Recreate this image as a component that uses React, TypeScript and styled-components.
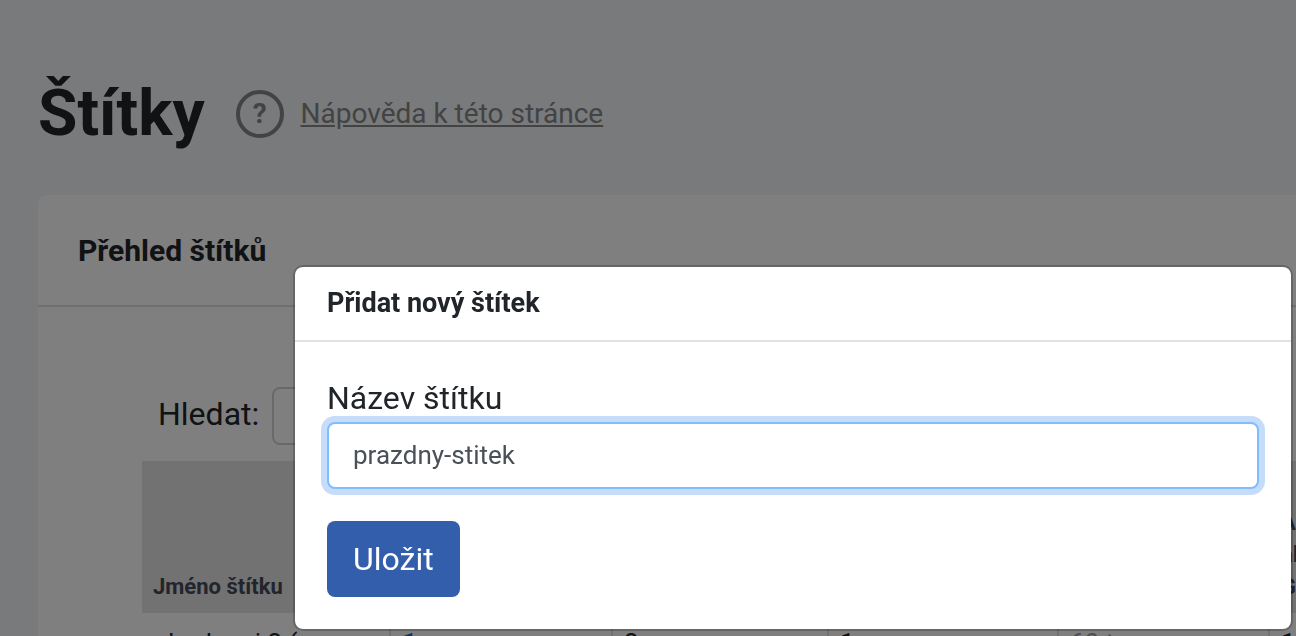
import React, { useState } from "react";
import styled, { createGlobalStyle } from "styled-components";

const GlobalStyle = createGlobalStyle`
  *, *::before, *::after { box-sizing: border-box; }
  body {
    margin: 0;
    background: #f2f4f8;
    color: #212529;
    font-family: Roboto, "Liberation Sans", sans-serif;
    font-size: 32px;
    line-height: 48px;
    overflow: hidden;
  }
`;

const Page = styled.main`
  height: 100vh;
  overflow: hidden;
  padding: 72px 0 0 38px;
`;

const PageHeader = styled.header`
  display: flex;
  align-items: center;
  height: 84px;
  margin-bottom: 39px;
`;

const PageTitle = styled.h1`
  margin: 0 31px 0 0;
  font-size: 64px;
  line-height: 76px;
  font-weight: 700;
`;

const HelpLink = styled.a`
  display: flex;
  align-items: center;
  gap: 17px;
  color: #868686;
  font-size: 28px;
  line-height: 42px;
  text-decoration: none;
`;

const HelpIcon = styled.span`
  display: flex;
  align-items: center;
  justify-content: center;
  width: 48px;
  height: 48px;
  border: 4px solid currentColor;
  border-radius: 50%;
  font-size: 28px;
  font-weight: 700;
`;

const HelpText = styled.span`
  text-decoration: underline;
`;

const Card = styled.section`
  background: #fff;
  border-radius: 8px 0 0 0;
`;

const CardHeader = styled.div`
  padding: 33px 40px 31px;
  border-bottom: 2px solid #dfdfdf;
`;

const CardTitle = styled.h2`
  margin: 0;
  font-size: 30px;
  line-height: 46px;
  font-weight: 700;
`;

const CardBody = styled.div`
  padding: 80px 0 0 104px;
`;

const SearchRow = styled.div`
  display: flex;
  align-items: center;
  gap: 13px;
  padding-left: 16px;
  margin-bottom: 16px;
`;

const SearchLabel = styled.label`
  padding-bottom: 4px;
`;

const SearchInput = styled.input`
  width: 360px;
  height: 58px;
  border: 2px solid #ced4da;
  border-radius: 8px;
  background: #fff;
  font: inherit;
`;

const Table = styled.table`
  table-layout: fixed;
  width: 1400px;
  border-collapse: separate;
  border-spacing: 0;
`;

const Column = styled.col<{ $width?: number }>`
  width: ${({ $width }) => ($width ? `${$width}px` : "auto")};
`;

const HeadCell = styled.th`
  height: 152px;
  padding: 10px 11px;
  vertical-align: bottom;
  text-align: left;
  background: #e4e4e4;
  color: #444b59;
  font-size: 22px;
  line-height: 32px;
  font-weight: 700;

  & + & {
    padding-left: 13px;
  }
`;

const Cell = styled.td<{ $muted?: boolean }>`
  padding: 12px 11px;
  border-left: 2px solid #dee2e6;
  color: ${({ $muted }) => ($muted ? "#a0a0a0" : "inherit")};
  font-size: 26px;
  line-height: 36px;
  white-space: nowrap;

  &:first-child {
    padding-left: 12px;
    border-left: 0;
  }
`;

const CountLink = styled.a`
  color: #335eac;
  font-weight: 700;
  text-decoration: none;
`;

const Backdrop = styled.div`
  position: fixed;
  inset: 0;
  padding: 265px 3px 0 293px;
  background: rgba(0, 0, 0, 0.5);
`;

const Modal = styled.div`
  border: 2px solid rgba(0, 0, 0, 0.2);
  border-radius: 10px;
  background: #fff;
  background-clip: padding-box;
`;

const ModalHeader = styled.div`
  padding: 16px 32px;
  border-bottom: 2px solid #dee2e6;
`;

const ModalTitle = styled.h2`
  margin: 0;
  font-size: 27px;
  line-height: 41px;
  font-weight: 700;
`;

const ModalForm = styled.form`
  padding: 32px;
`;

const FieldLabel = styled.label`
  display: block;
`;

const TextInput = styled.input`
  display: block;
  width: 100%;
  height: 67px;
  margin-bottom: 32px;
  padding: 0 24px 2px;
  border: 2px solid #80bdff;
  border-radius: 8px;
  outline: 0;
  background: #fff;
  box-shadow: 0 0 0 6px #c5dcfb;
  color: #495057;
  font: inherit;
  font-size: 26px;
`;

const SaveButton = styled.button`
  display: block;
  padding: 14px 26px;
  border: 0;
  border-radius: 8px;
  background: #335eac;
  color: #fff;
  font: inherit;
`;

const columns = [247, 222, 216, 230, 211];

export default function App() {
  const [name, setName] = useState("prazdny-stitek");

  return (
    <>
      <GlobalStyle />
      <Page>
        <PageHeader>
          <PageTitle>Štítky</PageTitle>
          <HelpLink href="#napoveda">
            <HelpIcon aria-hidden="true">?</HelpIcon>
            <HelpText>Nápověda k této stránce</HelpText>
          </HelpLink>
        </PageHeader>
        <Card>
          <CardHeader>
            <CardTitle>Přehled štítků</CardTitle>
          </CardHeader>
          <CardBody>
            <SearchRow>
              <SearchLabel htmlFor="search">Hledat:</SearchLabel>
              <SearchInput id="search" type="search" />
            </SearchRow>
            <Table>
              <colgroup>
                {columns.map((width, i) => (
                  <Column key={i} $width={width} />
                ))}
                <Column />
              </colgroup>
              <thead>
                <tr>
                  <HeadCell scope="col">Jméno štítku</HeadCell>
                  <HeadCell />
                  <HeadCell />
                  <HeadCell />
                  <HeadCell />
                  <HeadCell scope="col">
                    A<br />
                    al
                    <br />G
                  </HeadCell>
                </tr>
              </thead>
              <tbody>
                <tr>
                  <Cell>ahodnoci 2 (</Cell>
                  <Cell>
                    <CountLink href="#pocet">1</CountLink>
                  </Cell>
                  <Cell>2</Cell>
                  <Cell>1</Cell>
                  <Cell $muted>60 t</Cell>
                  <Cell>1</Cell>
                </tr>
              </tbody>
            </Table>
          </CardBody>
        </Card>
      </Page>
      <Backdrop>
        <Modal role="dialog" aria-modal="true" aria-labelledby="modal-title">
          <ModalHeader>
            <ModalTitle id="modal-title">Přidat nový štítek</ModalTitle>
          </ModalHeader>
          <ModalForm onSubmit={(e) => e.preventDefault()}>
            <FieldLabel htmlFor="tag-name">Název štítku</FieldLabel>
            <TextInput
              id="tag-name"
              type="text"
              value={name}
              onChange={(e) => setName(e.target.value)}
            />
            <SaveButton type="submit">Uložit</SaveButton>
          </ModalForm>
        </Modal>
      </Backdrop>
    </>
  );
}
